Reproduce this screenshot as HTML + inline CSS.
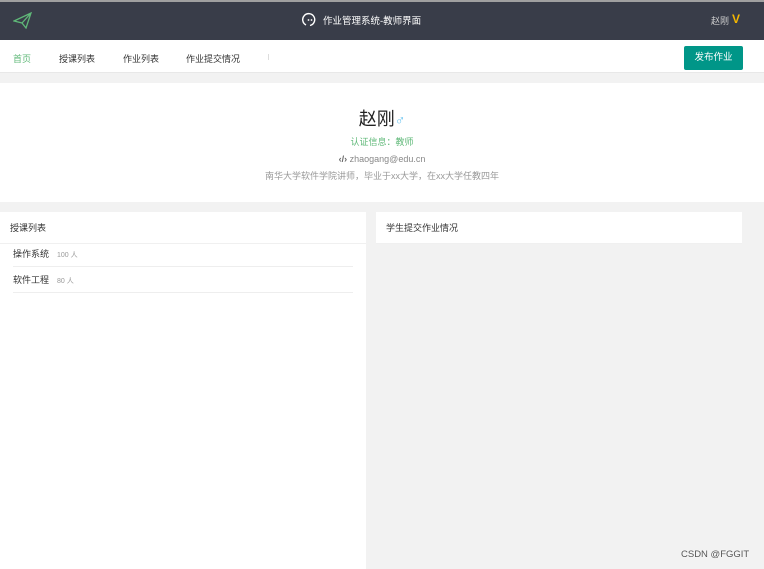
<!DOCTYPE html>
<html><head><meta charset="utf-8"><style>
*{margin:0;padding:0;box-sizing:border-box}
body{width:764px;height:569px;background:#f2f2f2;font-family:"Liberation Sans","Noto Sans CJK SC",sans-serif;position:relative;overflow:hidden;font-size:9px;color:#333}
.top{position:absolute;left:0;top:0;width:764px;height:40px;background:#393d49;border-top:2px solid #a0a0a0}
.nav{position:absolute;left:0;top:40px;width:764px;height:33px;background:#fff;border-bottom:1px solid #e8e8e8}
.nav span{position:absolute;top:12px;font-size:9px;color:#333}
.btn{position:absolute;left:684px;top:46px;width:59px;height:24px;background:#009688;color:#fff;font-size:9.5px;text-align:center;line-height:24px;border-radius:2px}
.prof{position:absolute;left:0;top:83px;width:764px;height:119px;background:#fff;text-align:center}
.left{position:absolute;left:0;top:212px;width:366px;height:357px;background:#fff}
.right{position:absolute;left:376px;top:212px;width:366px;height:32px;background:#fff}
.hd{height:32px;line-height:32px;padding-left:10px;font-size:9px;border-bottom:1px solid #f0f0f0}
.row{position:absolute;left:13px;width:340px;height:26px;line-height:26px;border-bottom:1px solid #eee;font-size:9px}
.row small{color:#999;font-size:7px;margin-left:8px}
</style></head><body>
<div class="top">
<svg style="position:absolute;left:13px;top:10px" width="19" height="17" viewBox="0 0 19 17"><path d="M1 9 L18 1 L13 16 L9 11 Z M9 11 L18 1" fill="none" stroke="#5fb878" stroke-width="1.3"/></svg>
<svg style="position:absolute;left:302px;top:10px" width="15" height="15" viewBox="0 0 15 15"><path d="M4 13 A6 6 0 1 1 8 13.5" fill="none" stroke="#fff" stroke-width="1.4"/><circle cx="6.5" cy="8" r="0.9" fill="#fff"/><circle cx="9.5" cy="8" r="0.9" fill="#fff"/></svg>
<span style="position:absolute;left:323px;top:11px;color:#fff;font-size:9.5px">作业管理系统-教师界面</span>
<span style="position:absolute;left:711px;top:12px;color:#ccc;font-size:9px">赵刚</span>
<span style="position:absolute;left:732px;top:10px;color:#f5b700;font-size:12px;font-weight:bold">V</span>
</div>
<div class="nav">
<span style="left:13px;color:#5fb878">首页</span>
<span style="left:59px">授课列表</span>
<span style="left:123px">作业列表</span>
<span style="left:186px">作业提交情况</span>
<span style="left:268px;top:14px;width:1px;height:6px;background:#ddd"></span>
</div>
<div class="btn">发布作业</div>
<div class="prof">
<div style="margin-top:22px;font-size:18px;color:#222">赵刚<span style="color:#6bc4f0;font-size:14px">♂</span></div>
<div style="margin-top:4px;color:#5fb878;font-size:9px">认证信息：教师</div>
<div style="margin-top:6px;color:#888;font-size:9px"><b style="color:#666">‹/›</b> zhaogang@edu.cn</div>
<div style="margin-top:5px;color:#999;font-size:9px">南华大学软件学院讲师，毕业于xx大学，在xx大学任教四年</div>
</div>
<div class="left"><div class="hd">授课列表</div>
<div class="row" style="top:29px">操作系统<small>100 人</small></div>
<div class="row" style="top:55px">软件工程<small>80 人</small></div>
</div>
<div class="right"><div class="hd">学生提交作业情况</div></div>
<div style="position:absolute;left:681px;top:549px;color:#555;font-size:9.5px;text-shadow:0 0 2px #fff">CSDN @FGGIT</div>
</body></html>
